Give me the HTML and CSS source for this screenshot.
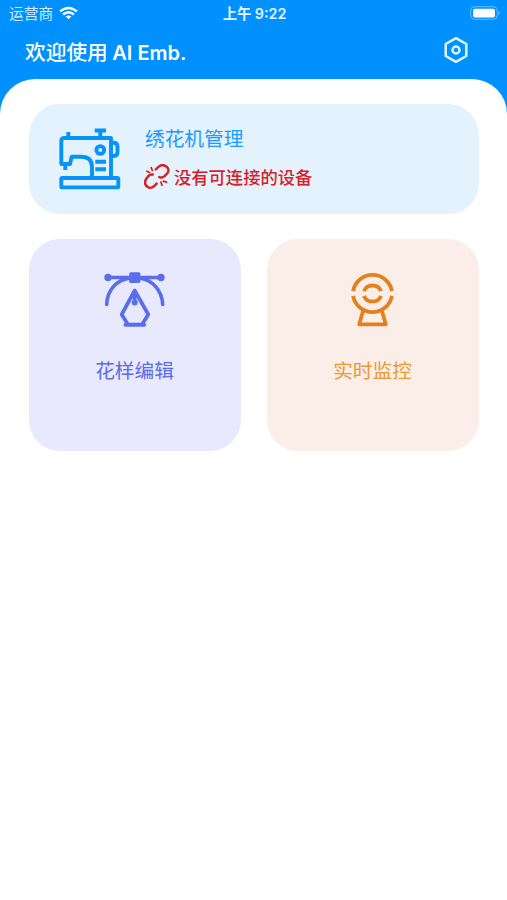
FILE: index.html
```html
<!DOCTYPE html>
<html lang="zh-CN">
<head>
<meta charset="utf-8">
<meta name="viewport" content="width=device-width, initial-scale=1">
<title>AI Emb.</title>
<link rel="stylesheet" href="styles.css">
</head>
<body>
<header class="header">
  <div class="status-bar">
    <div class="carrier"><span class="carrier-name">运营商</span>
      <svg class="wifi" viewBox="0 0 20 14" fill="none" stroke="#fff" stroke-width="2.6"><path d="M1.2 5.3Q10-2 18.8 5.3M4.3 8.6Q10 3.9 15.7 8.6"/><path d="M10 13.6 6.9 10.7Q10 8.4 13.1 10.7Z" fill="#fff" stroke="none"/></svg>
    </div>
    <div class="clock">上午 9:22</div>
    <svg class="battery" viewBox="0 0 31 14"><rect x=".7" y=".7" width="26.6" height="12.6" rx="4" fill="none" stroke="#fff" stroke-opacity=".4"/><rect x="3" y="2.8" width="22" height="8.6" rx="2" fill="#fff"/><path d="M28.7 4.8Q31 7 28.7 9.2Z" fill="#fff" opacity=".45"/></svg>
  </div>
  <div class="title-bar">
    <h1 class="title">欢迎使用 <span class="brand">AI Emb.</span></h1>
    <svg class="settings" viewBox="0 0 26 28" fill="none" stroke="#def4ff" stroke-width="2.5" stroke-linejoin="round"><path d="M13 2.2 23.3 8V20L13 25.8 2.7 20V8Z"/><circle cx="13" cy="14" r="3.5"/></svg>
  </div>
</header>
<main class="panel">
  <section class="card machine">
    <svg class="machine-icon" viewBox="0 0 64 62" fill="none" stroke="#0794f8" stroke-width="3.9" stroke-linejoin="round"><path d="M53 49V10H6.5Q3.3 10 3.3 13V36H12L13.7 28.7H23Q34 28.7 34 39V49M10.3 4V10M7.3 36V42M36.7 2.5H48M42.3 3V10M37.3 33.8H48M37.3 41.3H48M53 14.7H55.5Q59.5 14.7 59.5 18.5V24Q59.5 28 55.5 28H53"/><circle cx="42.3" cy="22" r="3.9"/><rect x="3.3" y="50" width="57" height="9.4" rx="1"/></svg>
    <div class="machine-info">
      <h2 class="machine-title">绣花机管理</h2>
      <div class="connection">
        <svg class="unlink" viewBox="0 0 26 26" fill="none" stroke="#da2027" stroke-width="2.5" stroke-linecap="round"><path d="M11.8 5.4 14.5 2.9C19-1.3 27.5 3.5 23.3 9.3L20.6 12.1C19 13.6 17 13.8 15.3 13.1M8.8 10.6C7 10.3 5.5 10.9 4.4 12L2.5 14.5C-1.8 20.5 5 26.6 10 22.3L12.6 19.6"/><path d="M2.9 7.3 5.5 8.5M7.2 3.7 8.3 6.5M16.9 18 18 21.2M19.3 17.1 22.4 18.2" stroke-width="1.8"/></svg>
        <span class="connection-text">没有可连接的设备</span>
      </div>
    </div>
  </section>
  <div class="tiles">
    <section class="card tile edit">
      <svg class="tile-icon" viewBox="0 0 62 56" fill="none" stroke="#5a6deb" stroke-width="3.7" stroke-linecap="round" stroke-linejoin="round"><path d="M3.5 5.5H57.5M2.7 32.5C3 18 13 7.5 26.5 6M58.7 32.5C58 18 48 7.5 35 6M30.7 18.5 17.7 42.5 24 52.5H38L44.3 42.5ZM21.3 52.8H40.3M30.7 20V30"/><circle cx="4" cy="5.5" r="3.7" fill="#5a6deb" stroke="none"/><circle cx="57" cy="5.5" r="3.7" fill="#5a6deb" stroke="none"/><rect x="25.2" y=".2" width="11.2" height="10.8" rx="1.5" fill="#5a6deb" stroke="none"/><circle cx="30.7" cy="30.5" r="3" fill="#5a6deb" stroke="none"/></svg>
      <h2 class="tile-title">花样编辑</h2>
    </section>
    <section class="card tile monitor">
      <svg class="tile-icon" viewBox="0 0 62 56" fill="none" stroke="#e3811c" stroke-width="3.8" stroke-linejoin="round"><path d="M11.1 19.2A19.7 19.7 0 0 1 49.9 19.2M11.1 23.8A19.7 19.7 0 0 0 49.9 23.8M22 19.2A9 8.5 0 0 1 39 19.2M22 23.8A9 8.5 0 0 0 39 23.8M20.9 39.5 17.2 52.3H43.8L40.1 39.5"/></svg>
      <h2 class="tile-title">实时监控</h2>
    </section>
  </div>
</main>
</body>
</html>
```
FILE: styles.css
```css
* { box-sizing: border-box; }
body {
  margin: 0;
  min-height: 900px;
  display: flex;
  flex-direction: column;
  background: #0091ff;
  font-family: Inter, "Noto Sans CJK SC", sans-serif;
}
h1, h2 { margin: 0; font-weight: 400; white-space: nowrap; }
svg { display: block; flex: none; }
.header { height: 79px; color: #fff; }
.status-bar {
  height: 27px;
  padding: 0 7px 0 9px;
  display: grid;
  grid-template-columns: 1fr auto 1fr;
  align-items: center;
}
.carrier { display: flex; align-items: center; gap: 6px; }
.carrier-name { font-size: 14.7px; line-height: 20px; color: #cfeeff; }
.wifi { width: 19px; height: 14px; margin-top: -2px; }
.clock { font-size: 14.3px; line-height: 20px; font-weight: 600; color: #e2f5ff; }
.battery { width: 31px; height: 14px; justify-self: end; margin: -1px -1px 0 0; }
.title-bar {
  height: 52px;
  padding: 0 38px 0 25px;
  display: flex;
  justify-content: space-between;
}
.title { font-size: 20.7px; line-height: 52px; font-weight: 500; }
.brand { font-size: 20px; font-weight: 600; margin-left: -1px; }
.settings { width: 26px; height: 28px; margin-top: 9px; }
.panel {
  flex: 1;
  padding: 25px 28px 0 29px;
  background: #fff;
  border-radius: 35px 35px 0 0;
}
.card { border-radius: 31px; }
.machine {
  height: 110px;
  padding: 24px 29px 0;
  display: flex;
  gap: 23px;
  background: #e3f2fc;
}
.machine-icon { width: 64px; height: 62px; }
.machine-title { font-size: 19.7px; line-height: 24px; color: #1c9aff; }
.machine-info { margin-top: -1px; }
.connection {
  display: flex;
  align-items: center;
  gap: 4px;
  margin: 13px 0 0 -1px;
  color: #da2027;
  font-size: 17.3px;
  line-height: 26px;
  font-weight: 500;
}
.connection-text { padding-top: 2px; line-height: 24px; }
.unlink { width: 26px; height: 26px; }
.tiles {
  display: grid;
  grid-template-columns: 1fr 1fr;
  gap: 26px;
  margin-top: 25px;
}
.tile {
  height: 212px;
  padding-top: 33px;
  display: flex;
  flex-direction: column;
  align-items: center;
}
.edit { background: #e8e9fc; color: #5b6bea; }
.monitor { background: #fbeee8; color: #e89a35; }
.tile-icon { width: 62px; height: 56px; }
.tile-title { margin: 28px 1px 0 0; font-size: 19.7px; line-height: 30px; }
```
